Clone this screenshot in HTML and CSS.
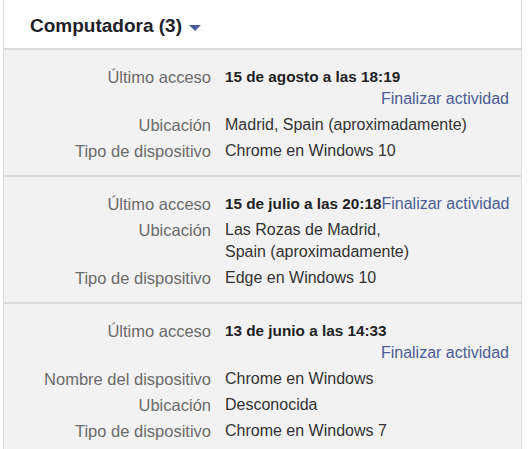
FILE: index.html
```html
<!DOCTYPE html>
<html lang="es">
<head>
<meta charset="utf-8">
<title>Computadora</title>
<link rel="stylesheet" href="styles.css">
</head>
<body>
<div class="panel">
  <div class="head">
    <span class="title">Computadora (3)</span>
    <span class="caret"></span>
  </div>
  <div class="session">
    <div class="label">Último acceso</div>
    <div class="value first wrap"><b>15 de agosto a las 18:19</b><a class="end">Finalizar actividad</a></div>
    <div class="label">Ubicación</div>
    <div class="value">Madrid, Spain (aproximadamente)</div>
    <div class="label">Tipo de dispositivo</div>
    <div class="value">Chrome en Windows 10</div>
  </div>
  <div class="session">
    <div class="label">Último acceso</div>
    <div class="value first"><b>15 de julio a las 20:18</b><a class="end">Finalizar actividad</a></div>
    <div class="label">Ubicación</div>
    <div class="value">Las Rozas de Madrid,<br>Spain (aproximadamente)</div>
    <div class="label">Tipo de dispositivo</div>
    <div class="value">Edge en Windows 10</div>
  </div>
  <div class="session last">
    <div class="label">Último acceso</div>
    <div class="value first wrap"><b>13 de junio a las 14:33</b><a class="end">Finalizar actividad</a></div>
    <div class="label">Nombre del dispositivo</div>
    <div class="value">Chrome en Windows</div>
    <div class="label">Ubicación</div>
    <div class="value">Desconocida</div>
    <div class="label">Tipo de dispositivo</div>
    <div class="value">Chrome en Windows 7</div>
  </div>
</div>
</body>
</html>
```
FILE: styles.css
```css
html, body {
  margin: 0;
  padding: 0;
  background: #ffffff;
}
body {
  font-family: "Liberation Sans", Arial, sans-serif;
  font-size: 16px;
  color: #333333;
}
.panel {
  margin-left: 3px;
  width: 519px;
  border-left: 1px solid #dcdcdc;
  border-right: 1px solid #dcdcdc;
  background: #f2f2f2;
  height: 449px;
  box-sizing: border-box;
}
.head {
  height: 48px;
  background: #ffffff;
  border-bottom: 2px solid #dadada;
  display: flex;
  align-items: center;
  padding-left: 26px;
}
.title {
  font-weight: bold;
  font-size: 19px;
  color: #1d2129;
  padding-top: 3px;
}
.caret {
  width: 0;
  height: 0;
  margin-left: 7px;
  margin-top: 7px;
  border-left: 6px solid transparent;
  border-right: 6px solid transparent;
  border-top: 6px solid #4b5c96;
}
.session {
  display: grid;
  grid-template-columns: 207px 1fr;
  column-gap: 14px;
  row-gap: 4px;
  line-height: 22px;
  padding: 16px 12px 13px 0;
  border-bottom: 2px solid #dadada;
}
.session.last {
  border-bottom: none;
}
.label {
  text-align: right;
  font-size: 16.5px;
  color: #6a6a6a;
}
.value {
  color: #333333;
}
.value b {
  font-size: 15.3px;
  white-space: nowrap;
  color: #222222;
}
.first {
  display: flex;
  flex-wrap: nowrap;
  align-items: baseline;
}
.end {
  margin-left: auto;
  color: #4b5c96;
  white-space: nowrap;
  cursor: pointer;
}
.wrap {
  flex-wrap: wrap;
}
.wrap .end {
  flex-basis: 100%;
  text-align: right;
}
```
